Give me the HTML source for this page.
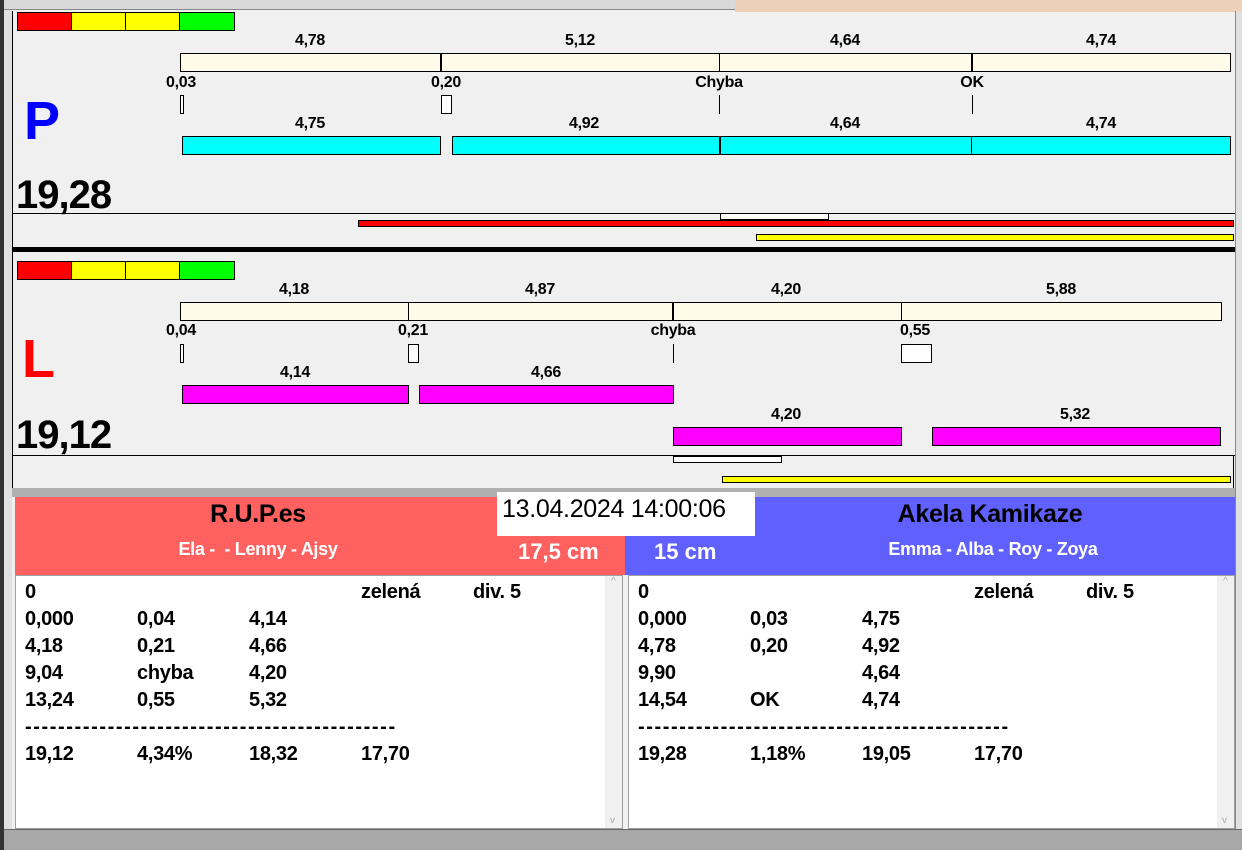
<!DOCTYPE html><html><head><meta charset="utf-8"><style>
*{margin:0;padding:0;box-sizing:border-box}
body{width:1242px;height:850px;overflow:hidden;background:#f0f0f0;position:relative;font-family:"Liberation Sans",Arial,sans-serif}
div{position:absolute}
.b{border:1px solid #000}
.t{font-weight:bold;font-size:16px;transform:translateX(-50%);white-space:nowrap;letter-spacing:-0.3px}
.cr{background:#fffbe8}
.cy{background:#00ffff}
.mg{background:#ff00ff}
.vl{width:1px;background:#000}
.row{font-weight:bold;font-size:20px;white-space:nowrap;letter-spacing:-0.3px;line-height:27px}
.d{letter-spacing:1.6px}
</style></head><body>
<div style="left:0;top:0;width:1242px;height:10px;background:#d8d8d8;border-bottom:1px solid #888"></div>
<div style="left:735px;top:0;width:507px;height:12px;background:#ecd0b8"></div>
<div style="left:0;top:0;width:4px;height:850px;background:#333"></div>
<div style="left:4px;top:10px;width:8px;height:840px;background:#e0e0e0"></div>
<div style="left:12px;top:11px;width:1px;height:480px;background:#000"></div>
<div style="left:1235px;top:11px;width:7px;height:839px;background:#e0e0e0;border-left:1px solid #888"></div>

<!-- P panel -->
<div class="b" style="left:17px;top:12px;width:55px;height:19px;background:#f00"></div>
<div class="b" style="left:71px;top:12px;width:55px;height:19px;background:#ff0"></div>
<div class="b" style="left:125px;top:12px;width:55px;height:19px;background:#ff0"></div>
<div class="b" style="left:179px;top:12px;width:56px;height:19px;background:#0f0"></div>
<div class="t" style="left:310px;top:32px">4,78</div>
<div class="t" style="left:580px;top:32px">5,12</div>
<div class="t" style="left:845px;top:32px">4,64</div>
<div class="t" style="left:1101px;top:32px">4,74</div>
<div class="b cr" style="left:180px;top:53px;width:1051px;height:19px"></div>
<div class="vl" style="left:440px;top:53px;height:19px;width:2px"></div>
<div class="vl" style="left:719px;top:53px;height:19px"></div>
<div class="vl" style="left:971px;top:53px;height:19px;width:2px"></div>
<div class="t" style="left:181px;top:74px">0,03</div>
<div class="t" style="left:446px;top:74px">0,20</div>
<div class="t" style="left:719px;top:74px">Chyba</div>
<div class="t" style="left:972px;top:74px">OK</div>
<div class="b" style="left:180px;top:95px;width:4px;height:19px;background:#fff"></div>
<div class="b" style="left:441px;top:95px;width:11px;height:19px;background:#fff"></div>
<div class="vl" style="left:719px;top:95px;height:19px"></div>
<div class="vl" style="left:972px;top:95px;height:19px"></div>
<div style="left:24px;top:90px;font-weight:bold;font-size:54px;color:#0000ff">P</div>
<div class="t" style="left:310px;top:115px">4,75</div>
<div class="t" style="left:584px;top:115px">4,92</div>
<div class="t" style="left:845px;top:115px">4,64</div>
<div class="t" style="left:1101px;top:115px">4,74</div>
<div class="b cy" style="left:182px;top:136px;width:259px;height:19px"></div>
<div class="b cy" style="left:452px;top:136px;width:779px;height:19px"></div>
<div class="vl" style="left:719px;top:136px;height:19px;width:2px"></div>
<div class="vl" style="left:971px;top:136px;height:19px"></div>
<div style="left:16px;top:173px;font-weight:bold;font-size:40px;letter-spacing:-1px">19,28</div>
<div style="left:12px;top:213px;width:1223px;height:1px;background:#000"></div>
<div class="b" style="left:720px;top:213px;width:109px;height:7px;background:#fff"></div>
<div class="b" style="left:358px;top:220px;width:876px;height:7px;background:#f00"></div>
<div class="b" style="left:756px;top:234px;width:478px;height:7px;background:#ff0"></div>
<div style="left:12px;top:247px;width:1223px;height:5px;background:#000"></div>

<!-- L panel -->
<div class="b" style="left:17px;top:261px;width:55px;height:19px;background:#f00"></div>
<div class="b" style="left:71px;top:261px;width:55px;height:19px;background:#ff0"></div>
<div class="b" style="left:125px;top:261px;width:55px;height:19px;background:#ff0"></div>
<div class="b" style="left:179px;top:261px;width:56px;height:19px;background:#0f0"></div>
<div class="t" style="left:294px;top:281px">4,18</div>
<div class="t" style="left:540px;top:281px">4,87</div>
<div class="t" style="left:786px;top:281px">4,20</div>
<div class="t" style="left:1061px;top:281px">5,88</div>
<div class="b cr" style="left:180px;top:302px;width:1042px;height:19px"></div>
<div class="vl" style="left:408px;top:302px;height:19px"></div>
<div class="vl" style="left:672px;top:302px;height:19px;width:2px"></div>
<div class="vl" style="left:901px;top:302px;height:19px"></div>
<div class="t" style="left:181px;top:322px">0,04</div>
<div class="t" style="left:413px;top:322px">0,21</div>
<div class="t" style="left:673px;top:322px">chyba</div>
<div class="t" style="left:915px;top:322px">0,55</div>
<div class="b" style="left:180px;top:344px;width:4px;height:19px;background:#fff"></div>
<div class="b" style="left:408px;top:344px;width:11px;height:19px;background:#fff"></div>
<div class="vl" style="left:673px;top:344px;height:19px"></div>
<div class="b" style="left:901px;top:344px;width:31px;height:19px;background:#fff"></div>
<div style="left:22px;top:328px;font-weight:bold;font-size:54px;color:#ff0000">L</div>
<div class="t" style="left:295px;top:364px">4,14</div>
<div class="t" style="left:546px;top:364px">4,66</div>
<div class="b mg" style="left:182px;top:385px;width:227px;height:19px"></div>
<div class="b mg" style="left:419px;top:385px;width:255px;height:19px"></div>
<div class="t" style="left:786px;top:406px">4,20</div>
<div class="t" style="left:1075px;top:406px">5,32</div>
<div class="b mg" style="left:673px;top:427px;width:229px;height:19px"></div>
<div class="b mg" style="left:932px;top:427px;width:289px;height:19px"></div>
<div style="left:16px;top:413px;font-weight:bold;font-size:40px;letter-spacing:-1px">19,12</div>
<div style="left:12px;top:455px;width:1223px;height:1px;background:#000"></div>
<div style="left:1233px;top:455px;width:1px;height:33px;background:#000"></div>
<div class="b" style="left:673px;top:456px;width:109px;height:7px;background:#fff"></div>
<div class="b" style="left:722px;top:476px;width:509px;height:7px;background:#ff0"></div>
<div style="left:12px;top:488px;width:1223px;height:9px;background:#b0b0b0"></div>

<!-- bottom headers -->
<div style="left:15px;top:497px;width:610px;height:78px;background:#ff6060"></div>
<div style="left:625px;top:497px;width:610px;height:78px;background:#6060ff"></div>
<div style="left:497px;top:492px;width:258px;height:44px;background:#fff;font-size:25px;padding:3px 0 0 5px;letter-spacing:-0.3px">13.04.2024 14:00:06</div>
<div class="t" style="left:258px;top:500px;font-size:25px">R.U.P.es</div>
<div class="t" style="left:258px;top:539px;font-size:18px;color:#fff">Ela -&nbsp; - Lenny - Ajsy</div>
<div style="left:518px;top:539px;font-size:22px;font-weight:bold;color:#fff">17,5 cm</div>
<div style="left:654px;top:539px;font-size:22px;font-weight:bold;color:#fff">15 cm</div>
<div class="t" style="left:990px;top:500px;font-size:25px">Akela Kamikaze</div>
<div class="t" style="left:993px;top:539px;font-size:18px;color:#fff">Emma - Alba - Roy - Zoya</div>

<!-- text boxes -->
<div style="left:15px;top:575px;width:608px;height:254px;background:#fff;border:1px solid #a0a0a0"></div>
<div style="left:605px;top:576px;width:17px;height:252px;background:#f0f0f0;color:#aaa;font-size:10px;text-align:center">^<div style="bottom:2px;left:5px">v</div></div>
<div style="left:628px;top:575px;width:607px;height:254px;background:#fff;border:1px solid #a0a0a0"></div>
<div style="left:1217px;top:576px;width:17px;height:252px;background:#f0f0f0;color:#aaa;font-size:10px;text-align:center">^<div style="bottom:2px;left:5px">v</div></div>

<div class="row" style="left:25px;top:579px">0<br>0,000<br>4,18<br>9,04<br>13,24<br><span class="d">---------------------------------------------</span><br>19,12</div>
<div class="row" style="left:137px;top:606px">0,04<br>0,21<br>chyba<br>0,55<br><br>4,34%</div>
<div class="row" style="left:249px;top:606px">4,14<br>4,66<br>4,20<br>5,32<br><br>18,32</div>
<div class="row" style="left:361px;top:579px">zelená</div>
<div class="row" style="left:361px;top:741px">17,70</div>
<div class="row" style="left:473px;top:579px">div. 5</div>

<div class="row" style="left:638px;top:579px">0<br>0,000<br>4,78<br>9,90<br>14,54<br><span class="d">---------------------------------------------</span><br>19,28</div>
<div class="row" style="left:750px;top:606px">0,03<br>0,20<br><br>OK<br><br>1,18%</div>
<div class="row" style="left:862px;top:606px">4,75<br>4,92<br>4,64<br>4,74<br><br>19,05</div>
<div class="row" style="left:974px;top:579px">zelená</div>
<div class="row" style="left:974px;top:741px">17,70</div>
<div class="row" style="left:1086px;top:579px">div. 5</div>

<div style="left:4px;top:829px;width:1238px;height:21px;background:#a8a8a8;border-top:1px solid #666"></div>
</body></html>
